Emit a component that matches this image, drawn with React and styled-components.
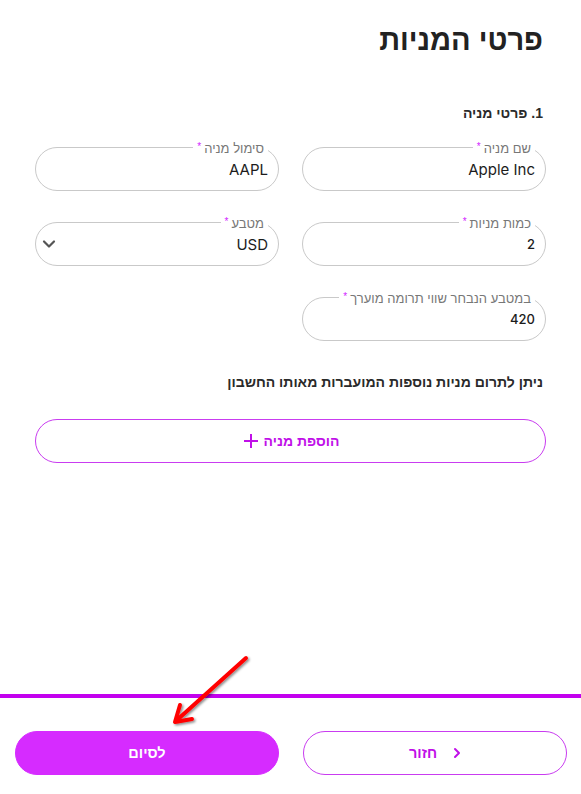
import React from 'react';
import styled, { createGlobalStyle } from 'styled-components';

const GlobalStyle = createGlobalStyle`
  html, body {
    margin: 0;
    padding: 0;
    background: #fff;
  }
  body {
    font-family: "Liberation Sans", "DejaVu Sans", sans-serif;
    color: #222;
  }
`;

const Page = styled.div`
  position: relative;
  min-height: 794px;
  display: flex;
  flex-direction: column;
  direction: rtl;
`;

const Content = styled.main`
  flex: 1;
  padding: 22px 35px 0 35px;
`;

const Title = styled.h1`
  margin: 0 3px 0 0;
  font-size: 29px;
  line-height: 36px;
  font-weight: bold;
  color: #222;
`;

const SectionTitle = styled.h2`
  margin: 46px 3px 0 0;
  font-size: 14px;
  line-height: 18px;
  font-weight: bold;
  color: #2a2a2a;
`;

const Grid = styled.div`
  display: grid;
  grid-template-columns: 1fr 1fr;
  column-gap: 23px;
  row-gap: 31px;
  margin-top: 25px;
`;

const Field = styled.div`
  position: relative;
  height: 44px;
  border: 1px solid #c9c9c9;
  border-radius: 23px;
  box-sizing: border-box;
  display: flex;
  align-items: center;
  padding: 0 10px 0 6px;
`;

const Label = styled.span`
  position: absolute;
  top: -10px;
  right: 10px;
  padding: 0 4px;
  background: #fff;
  font-size: 13px;
  line-height: 17px;
  color: #777;
  white-space: nowrap;
`;

const Star = styled.span`
  color: #d21cff;
  font-size: 10px;
  margin-right: 3px;
  vertical-align: 3px;
`;

const Value = styled.span`
  flex: 1;
  font-family: "Inter", "Liberation Sans", sans-serif;
  font-size: ${p => (p.$small ? '13px' : '15px')};
  font-weight: ${p => (p.$small ? 500 : 400)};
  color: #1c1c1c;
  text-align: right;
`;

const Chevron = styled.svg`
  width: 14px;
  height: 10px;
`;

const Note = styled.p`
  margin: 31px 3px 0 0;
  font-size: 14px;
  line-height: 20px;
  font-weight: bold;
  color: #2a2a2a;
`;

const AddButton = styled.button`
  margin-top: 27px;
  width: 100%;
  height: 44px;
  border: 1px solid #c93cf0;
  border-radius: 23px;
  background: #fff;
  display: flex;
  align-items: center;
  justify-content: center;
  gap: 4px;
  font-family: "Liberation Sans", "DejaVu Sans", sans-serif;
  font-size: 14px;
  font-weight: bold;
  color: #c010e8;
  direction: rtl;
`;

const Footer = styled.footer`
  border-top: 4px solid #c300ee;
  padding: 33px 14px 19px 15px;
  display: grid;
  grid-template-columns: 1fr 1fr;
  column-gap: 24px;
`;

const FooterButton = styled.button`
  height: 44px;
  border-radius: 23px;
  border: 1px solid ${p => (p.$primary ? '#d62bff' : '#c93cf0')};
  background: ${p => (p.$primary ? '#d62bff' : '#fff')};
  color: ${p => (p.$primary ? '#fff' : '#c010e8')};
  font-family: "Liberation Sans", "DejaVu Sans", sans-serif;
  font-size: 14.5px;
  font-weight: bold;
  display: flex;
  align-items: center;
  justify-content: center;
  gap: 16px;
  direction: rtl;
`;

const Arrow = styled.svg`
  position: absolute;
  left: 165px;
  top: 650px;
  width: 95px;
  height: 80px;
  pointer-events: none;
`;

function InputField({ label, value, select, small }) {
  return (
    <Field>
      <Label>
        {label}
        <Star>*</Star>
      </Label>
      <Value $small={small}>{value}</Value>
      {select && (
        <Chevron viewBox="0 0 14 10">
          <path d="M2 2.5 L7 7.5 L12 2.5" fill="none" stroke="#555" strokeWidth="2.2" strokeLinecap="round" strokeLinejoin="round" />
        </Chevron>
      )}
    </Field>
  );
}

export default function App() {
  return (
    <>
      <GlobalStyle />
      <Page>
        <Content>
          <Title>פרטי המניות</Title>
          <SectionTitle>1. פרטי מניה</SectionTitle>
          <Grid>
            <InputField label="שם מניה" value="Apple Inc" />
            <InputField label="סימול מניה" value="AAPL" />
            <InputField label="כמות מניות" value="2" small />
            <InputField label="מטבע" value="USD" select />
            <InputField label="במטבע הנבחר שווי תרומה מוערך" value="420" small />
          </Grid>
          <Note>ניתן לתרום מניות נוספות המועברות מאותו החשבון</Note>
          <AddButton>
            <span>הוספת מניה</span>
            <svg width="18" height="18" viewBox="0 0 18 18">
              <path d="M9 2 V16 M2 9 H16" stroke="#c010e8" strokeWidth="2" />
            </svg>
          </AddButton>
        </Content>
        <Footer>
          <FooterButton>
            <svg width="8" height="12" viewBox="0 0 8 12">
              <path d="M2 2 L6 6 L2 10" fill="none" stroke="#c010e8" strokeWidth="2" strokeLinecap="round" strokeLinejoin="round" />
            </svg>
            <span>חזור</span>
          </FooterButton>
          <FooterButton $primary>לסיום</FooterButton>
        </Footer>
        <Arrow viewBox="0 0 95 80">
          <defs>
            <filter id="sh" x="-20%" y="-20%" width="140%" height="140%">
              <feDropShadow dx="1.5" dy="1.5" stdDeviation="1.2" floodColor="#000" floodOpacity="0.45" />
            </filter>
          </defs>
          <g filter="url(#sh)" stroke="#ff0000" strokeWidth="4" strokeLinecap="round" strokeLinejoin="round" fill="none">
            <path d="M81 8 L12 70" />
            <path d="M10 72 L15 55 M10 72 L27 69" />
          </g>
        </Arrow>
      </Page>
    </>
  );
}
